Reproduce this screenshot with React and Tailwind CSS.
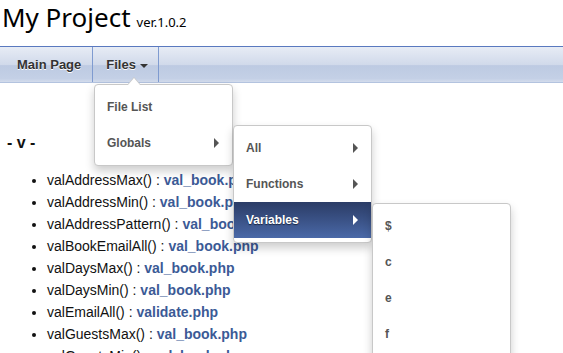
const items = [
  ["valAddressMax()", "val_book.php"],
  ["valAddressMin()", "val_book.php"],
  ["valAddressPattern()", "val_book.php"],
  ["valBookEmailAll()", "val_book.php"],
  ["valDaysMax()", "val_book.php"],
  ["valDaysMin()", "val_book.php"],
  ["valEmailAll()", "validate.php"],
  ["valGuestsMax()", "val_book.php"],
  ["valGuestsMin()", "val_book.php"],
  ["valNameMax()", "val_book.php"],
];

function Arrow({ light }) {
  return (
    <span
      className={
        "w-0 h-0 border-y-[5px] border-y-transparent border-l-[5px] " +
        (light ? "border-l-white" : "border-l-[#555]")
      }
    />
  );
}

function MenuItem({ label, sub, active }) {
  return (
    <div
      className={
        "h-[36px] flex items-center justify-between pr-[13px] text-[12px] font-bold " +
        (active
          ? "pl-[12px] text-white bg-gradient-to-b from-[#2b3c66] to-[#4a69a8] [text-shadow:0_1px_1px_#1a2540]"
          : "pl-[12px] text-[#555]")
      }
    >
      <span>{label}</span>
      {sub && <Arrow light={active} />}
    </div>
  );
}

function Menu({ className, children }) {
  return (
    <div
      className={
        "absolute w-[139px] bg-white border border-[#c8c8c8] rounded-[4px] py-[4px] shadow-[0_5px_10px_rgba(0,0,0,0.2)] " +
        className
      }
    >
      {children}
    </div>
  );
}

export default function App() {
  return (
    <div
      className="relative w-[563px] h-[353px] overflow-hidden bg-white text-[#222]"
      style={{ fontFamily: '"Liberation Sans", Arial, sans-serif' }}
    >
      {/* header */}
      <div
        className="h-[46px] pl-[2px] flex items-baseline gap-[6px]"
        style={{ fontFamily: '"Noto Sans", sans-serif' }}
      >
        <span className="text-[26px] leading-[34px] text-black">My Project</span>
        <span className="text-[13px] text-black">ver.1.0.2</span>
      </div>

      {/* nav */}
      <div className="h-[37px] border-t border-t-[#5a79bf] border-b border-b-[#b3c3df] bg-[linear-gradient(to_bottom,#e7ecf5_0%,#d0d9ea_52%,#bdcae2_53%,#c4d0e6_90%,#d3dcec_100%)] flex text-[13px] font-bold text-[#333] [text-shadow:0_1px_0_#fff]">
        <div className="pl-[17px] pr-[11px] flex items-center border-r border-r-[#7f9bd0]">
          Main Page
        </div>
        <div className="pl-[13px] pr-[10px] flex items-center border-r border-r-[#7f9bd0]">
          Files
          <span className="ml-[4px] mt-[2px] w-0 h-0 border-x-[4px] border-x-transparent border-t-[4px] border-t-[#333]" />
        </div>
      </div>

      {/* content */}
      <div className="pl-[7px]">
        <div className="mt-[50px] h-[20px] leading-[20px] text-[16px] font-bold text-[#111]">- v -</div>
        <ul className="mt-[16px] pl-[40px] list-disc text-[14px] leading-[22px] text-[#111]">
          {items.map(([fn, file]) => (
            <li key={fn}>
              {fn} : <a className="font-bold text-[#3b5a96]">{file}</a>
            </li>
          ))}
        </ul>
      </div>

      {/* dropdowns */}
      <Menu className="left-[94px] top-[84px]">
        <span className="absolute left-[32px] -top-[8px] w-0 h-0 border-x-[7px] border-x-transparent border-b-[8px] border-b-[#c8c8c8]" />
        <span className="absolute left-[33px] -top-[7px] w-0 h-0 border-x-[6px] border-x-transparent border-b-[7px] border-b-white" />
        <MenuItem label="File List" />
        <MenuItem label="Globals" sub />
      </Menu>
      <Menu className="left-[233px] top-[125px]">
        <MenuItem label="All" sub />
        <MenuItem label="Functions" sub />
        <MenuItem label="Variables" sub active />
      </Menu>
      <Menu className="left-[372px] top-[203px]">
        <MenuItem label="$" />
        <MenuItem label="c" />
        <MenuItem label="e" />
        <MenuItem label="f" />
        <MenuItem label="g" />
      </Menu>
    </div>
  );
}
